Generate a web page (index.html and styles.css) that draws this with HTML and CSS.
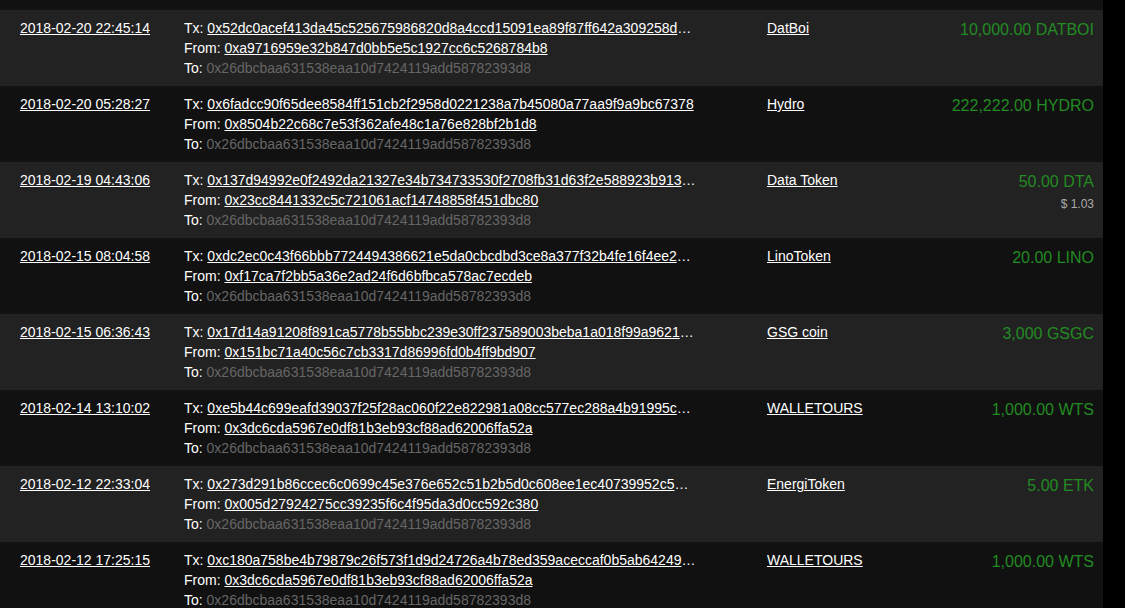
FILE: index.html
```html
<!DOCTYPE html>
<html>
<head>
<meta charset="utf-8">
<link rel="stylesheet" href="styles.css">
</head>
<body>
<div class="page">
  <div class="list">
    <div class="row odd">
      <div class="date"><a href="#">2018-02-20 22:45:14</a></div>
      <div class="tx">
        <div class="line">Tx: <a href="#">0x52dc0acef413da45c525675986820d8a4ccd15091ea89f87ff642a309258d5a1</a></div>
        <div class="line">From: <a href="#">0xa9716959e32b847d0bb5e5c1927cc6c5268784b8</a></div>
        <div class="line">To: <span class="to">0x26dbcbaa631538eaa10d7424119add58782393d8</span></div>
      </div>
      <div class="token"><a href="#">DatBoi</a></div>
      <div class="amount"><div class="val">10,000.00 DATBOI</div></div>
    </div>
    <div class="row">
      <div class="date"><a href="#">2018-02-20 05:28:27</a></div>
      <div class="tx">
        <div class="line">Tx: <a href="#">0x6fadcc90f65dee8584ff151cb2f2958d0221238a7b45080a77aa9f9a9bc67378</a></div>
        <div class="line">From: <a href="#">0x8504b22c68c7e53f362afe48c1a76e828bf2b1d8</a></div>
        <div class="line">To: <span class="to">0x26dbcbaa631538eaa10d7424119add58782393d8</span></div>
      </div>
      <div class="token"><a href="#">Hydro</a></div>
      <div class="amount"><div class="val">222,222.00 HYDRO</div></div>
    </div>
    <div class="row odd">
      <div class="date"><a href="#">2018-02-19 04:43:06</a></div>
      <div class="tx">
        <div class="line">Tx: <a href="#">0x137d94992e0f2492da21327e34b734733530f2708fb31d63f2e588923b913c4e</a></div>
        <div class="line">From: <a href="#">0x23cc8441332c5c721061acf14748858f451dbc80</a></div>
        <div class="line">To: <span class="to">0x26dbcbaa631538eaa10d7424119add58782393d8</span></div>
      </div>
      <div class="token"><a href="#">Data Token</a></div>
      <div class="amount"><div class="val">50.00 DTA</div><div class="usd">$ 1.03</div></div>
    </div>
    <div class="row">
      <div class="date"><a href="#">2018-02-15 08:04:58</a></div>
      <div class="tx">
        <div class="line">Tx: <a href="#">0xdc2ec0c43f66bbb7724494386621e5da0cbcdbd3ce8a377f32b4fe16f4ee2a70</a></div>
        <div class="line">From: <a href="#">0xf17ca7f2bb5a36e2ad24f6d6bfbca578ac7ecdeb</a></div>
        <div class="line">To: <span class="to">0x26dbcbaa631538eaa10d7424119add58782393d8</span></div>
      </div>
      <div class="token"><a href="#">LinoToken</a></div>
      <div class="amount"><div class="val">20.00 LINO</div></div>
    </div>
    <div class="row odd">
      <div class="date"><a href="#">2018-02-15 06:36:43</a></div>
      <div class="tx">
        <div class="line">Tx: <a href="#">0x17d14a91208f891ca5778b55bbc239e30ff237589003beba1a018f99a9621b0e</a></div>
        <div class="line">From: <a href="#">0x151bc71a40c56c7cb3317d86996fd0b4ff9bd907</a></div>
        <div class="line">To: <span class="to">0x26dbcbaa631538eaa10d7424119add58782393d8</span></div>
      </div>
      <div class="token"><a href="#">GSG coin</a></div>
      <div class="amount"><div class="val">3,000 GSGC</div></div>
    </div>
    <div class="row">
      <div class="date"><a href="#">2018-02-14 13:10:02</a></div>
      <div class="tx">
        <div class="line">Tx: <a href="#">0xe5b44c699eafd39037f25f28ac060f22e822981a08cc577ec288a4b91995c6d2</a></div>
        <div class="line">From: <a href="#">0x3dc6cda5967e0df81b3eb93cf88ad62006ffa52a</a></div>
        <div class="line">To: <span class="to">0x26dbcbaa631538eaa10d7424119add58782393d8</span></div>
      </div>
      <div class="token"><a href="#">WALLETOURS</a></div>
      <div class="amount"><div class="val">1,000.00 WTS</div></div>
    </div>
    <div class="row odd">
      <div class="date"><a href="#">2018-02-12 22:33:04</a></div>
      <div class="tx">
        <div class="line">Tx: <a href="#">0x273d291b86ccec6c0699c45e376e652c51b2b5d0c608ee1ec40739952c5e81f3</a></div>
        <div class="line">From: <a href="#">0x005d27924275cc39235f6c4f95da3d0cc592c380</a></div>
        <div class="line">To: <span class="to">0x26dbcbaa631538eaa10d7424119add58782393d8</span></div>
      </div>
      <div class="token"><a href="#">EnergiToken</a></div>
      <div class="amount"><div class="val">5.00 ETK</div></div>
    </div>
    <div class="row">
      <div class="date"><a href="#">2018-02-12 17:25:15</a></div>
      <div class="tx">
        <div class="line">Tx: <a href="#">0xc180a758be4b79879c26f573f1d9d24726a4b78ed359aceccaf0b5ab64249e17</a></div>
        <div class="line">From: <a href="#">0x3dc6cda5967e0df81b3eb93cf88ad62006ffa52a</a></div>
        <div class="line">To: <span class="to">0x26dbcbaa631538eaa10d7424119add58782393d8</span></div>
      </div>
      <div class="token"><a href="#">WALLETOURS</a></div>
      <div class="amount"><div class="val">1,000.00 WTS</div></div>
    </div>
  </div>
</div>
</body>
</html>
```
FILE: styles.css
```css
html, body {
  margin: 0;
  padding: 0;
  background: #000;
  height: 100%;
  overflow: hidden;
}
body {
  font-family: "Liberation Sans", Arial, sans-serif;
  font-size: 14px;
  color: #fff;
}
.page {
  width: 1103px;
  background: #111;
  padding-top: 10px;
  min-height: 100%;
}
.row {
  display: grid;
  grid-template-columns: 164px 583px 1fr auto;
  padding: 8px 9px 8px 20px;
  height: 60px;
  line-height: 20px;
}
.row.odd {
  background: #222;
}
a {
  color: #fff;
  text-decoration: underline;
}
.tx {
  min-width: 0;
}
.line {
  width: 512px;
  white-space: nowrap;
  overflow: hidden;
  text-overflow: ellipsis;
}
.to {
  color: #666;
}
.amount {
  text-align: right;
}
.val {
  color: #228b22;
  font-size: 16px;
  line-height: 21px;
  padding-top: 1px;
}
.usd {
  color: #aaa;
  font-size: 12px;
  line-height: 20px;
  margin-top: 2px;
}
```
